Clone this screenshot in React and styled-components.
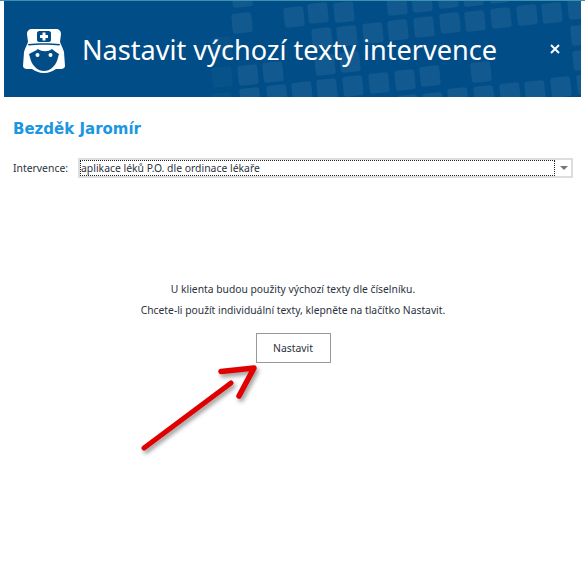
import React from 'react';
import styled, { createGlobalStyle } from 'styled-components';

const GlobalStyle = createGlobalStyle`
  html, body {
    margin: 0;
    padding: 0;
    background: #fff;
  }
`;

// centres of the pale squares in the header backdrop
const TILES = [
  [294, 17], [318, 13], [344, 12], [397, 5], [422, 2], [448, -2], [473, -4], [499, -7],
  [398, 30], [424, 27], [450, 23], [475, 21], [501, 18], [527, 15], [552, 13], [578, 9],
  [322, 38], [347, 36], [373, 33], [581, 35],
  [325, 65], [350, 62], [430, 76], [481, 72], [583, 60],
  [302, 92], [327, 89], [353, 86], [379, 83], [405, 80],
  [458, 98], [484, 96], [510, 93], [535, 91], [561, 87], [587, 84],
  [408, 105], [433, 103], [242, 23], [242, -3], [273, 72], [248, 75], [250, 98], [277, 95],
];

const FAINT_TILES = [[222, 47], [222, 77], [222, 103]];

const App = () => {
  return (
    <>
      <GlobalStyle />
      <Page>
        <Header>
          <Backdrop viewBox="4 1 577 96" aria-hidden="true">
            {TILES.map(([x, y]) => (
              <rect
                key={`${x}-${y}`}
                x={x - 10}
                y={y - 10}
                width="20"
                height="20"
                rx="3"
                fill="#fff"
                opacity="0.07"
                transform={`rotate(-6 ${x} ${y})`}
              />
            ))}
            {FAINT_TILES.map(([x, y]) => (
              <rect
                key={`${x}-${y}`}
                x={x - 10}
                y={y - 10}
                width="20"
                height="20"
                rx="3"
                fill="#fff"
                opacity="0.03"
                transform={`rotate(-6 ${x} ${y})`}
              />
            ))}
          </Backdrop>
          <NurseIcon />
          <Title>Nastavit výchozí texty intervence</Title>
          <CloseButton aria-label="Zavřít">
            <svg width="10" height="10" viewBox="0 0 10 10" aria-hidden="true">
              <path d="M1 1 L9 9 M9 1 L1 9" stroke="#fff" strokeWidth="2" />
            </svg>
          </CloseButton>
        </Header>

        <Content>
          <ClientName>Bezděk Jaromír</ClientName>
          <FieldRow>
            <FieldLabel>Intervence:</FieldLabel>
            <Combo>
              <ComboValue>aplikace léků P.O. dle ordinace lékaře</ComboValue>
              <ComboArrow />
            </Combo>
          </FieldRow>

          <Notice>
            <NoticeLine>U klienta budou použity výchozí texty dle číselníku.</NoticeLine>
            <NoticeLine>Chcete-li použít individuální texty, klepněte na tlačítko Nastavit.</NoticeLine>
            <SetButton>Nastavit</SetButton>
          </Notice>
        </Content>

        <Arrow />
      </Page>
    </>
  );
};

const NurseIcon = () => (
  <IconSvg viewBox="0 0 42 46" aria-hidden="true">
    <path
      fill="#fff"
      d="M9 1 H33 C36 1 38 3 38 6 L37 14 C38 17 40 20 41 24 L42 38 C42 40 40 41 38 41 L33 41 C30 43 26 45 21 45 C16 45 12 43 9 41 L4 41 C2 41 0 40 0 38 L1 24 C2 20 4 17 5 14 L4 6 C4 3 6 1 9 1 Z"
    />
    <path fill="#014d87" d="M16 3 H26 C27 3 28 4 28 5 V12 C28 13 27 14 26 14 H16 C15 14 14 13 14 12 V5 C14 4 15 3 16 3 Z" />
    <path fill="#fff" d="M19.5 4.500 H22.5 V7 H25 V10 H22.5 V12.5 H19.5 V10 H17 V7 H19.5 Z" />
    <path fill="#014d87" d="M5 16 C14 15 28 15 37 16 L36.5 17.5 C28 16.5 14 16.5 5.500 17.5 Z" />
    <path fill="#014d87" d="M6 26 C9 24 13 23 15 21 C19 24 25 24 29 21 C31 23 33 24 36 26 L34 33 C32 38 27 43 21 43 C15 43 10 38 8 33 Z" />
    <circle cx="14.500" cy="27" r="2" fill="#fff" />
    <circle cx="27.500" cy="27" r="2" fill="#fff" />
  </IconSvg>
);

const Arrow = () => (
  <ArrowSvg viewBox="0 0 130 100" aria-hidden="true">
    <g fill="none" stroke="#e10000" strokeLinecap="round" strokeLinejoin="round">
      <path d="M4 88 L91 23" strokeWidth="5" />
      <path d="M81 11.5 L114 8 L99 36" strokeWidth="5.5" />
    </g>
  </ArrowSvg>
);

const Page = styled.div`
  position: relative;
  width: 585px;
  height: 577px;
  overflow: hidden;
  box-sizing: border-box;
  border-top: 1px solid #3a94ad;
  padding-left: 4px;
  font-family: 'Noto Sans', sans-serif;
  color: #2b3240;
`;

const Header = styled.header`
  position: relative;
  display: flex;
  align-items: center;
  width: 577px;
  height: 96px;
  padding: 0 19px;
  box-sizing: border-box;
  background: #014d87;
  overflow: hidden;
`;

const Backdrop = styled.svg`
  position: absolute;
  inset: 0;
  width: 577px;
  height: 96px;
`;

const IconSvg = styled.svg`
  position: relative;
  flex: none;
  width: 42px;
  height: 46px;
  margin-top: 3px;
`;

const Title = styled.h1`
  position: relative;
  margin: 0 0 0 17px;
  font-size: 27.1px;
  font-weight: 400;
  color: #fff;
  white-space: nowrap;
`;

const CloseButton = styled.button`
  position: relative;
  display: flex;
  margin: 0 2px 0 auto;
  padding: 0;
  border: 0;
  background: none;
`;

const Content = styled.main`
  padding: 22px 4px 0 9px;
  box-sizing: border-box;
  width: 573px;
`;

const ClientName = styled.h2`
  margin: 0 0 19px;
  font-family: 'DejaVu Sans', sans-serif;
  font-size: 15px;
  line-height: 20px;
  font-weight: 700;
  color: #1a96e2;
`;

const FieldRow = styled.div`
  display: flex;
  align-items: center;
`;

const FieldLabel = styled.span`
  flex: none;
  width: 66px;
  margin-right: -1px;
  font-size: 10.4px;
`;

const Combo = styled.div`
  flex: 1;
  display: flex;
  align-items: center;
  height: 20px;
  box-sizing: border-box;
  border: 2px solid #ddd;
  background: #fff;
`;

const ComboValue = styled.div`
  flex: 1;
  height: 16px;
  box-sizing: border-box;
  border: 1px dotted #222;
  font-size: 10.4px;
  line-height: 14px;
`;

const ComboArrow = styled.span`
  flex: none;
  width: 0;
  height: 0;
  margin: 0 3px 0 5px;
  border-left: 4px solid transparent;
  border-right: 4px solid transparent;
  border-top: 4px solid #777;
`;

const Notice = styled.section`
  display: flex;
  flex-direction: column;
  align-items: center;
  margin-top: 105px;
  width: 560px;
`;

const NoticeLine = styled.p`
  margin: 0 0 8px;
  font-size: 10.3px;
  line-height: 13px;
  white-space: nowrap;
`;

const SetButton = styled.button`
  width: 75px;
  height: 30px;
  margin-top: 8px;
  padding: 0;
  border: 1px solid #999;
  background: #fff;
  color: inherit;
  font-family: inherit;
  font-size: 10.4px;
`;

const ArrowSvg = styled.svg`
  position: absolute;
  left: 140px;
  top: 359px;
  width: 130px;
  height: 100px;
  filter: drop-shadow(2px 3px 2px rgba(0, 0, 0, 0.4));
`;

export default App;
